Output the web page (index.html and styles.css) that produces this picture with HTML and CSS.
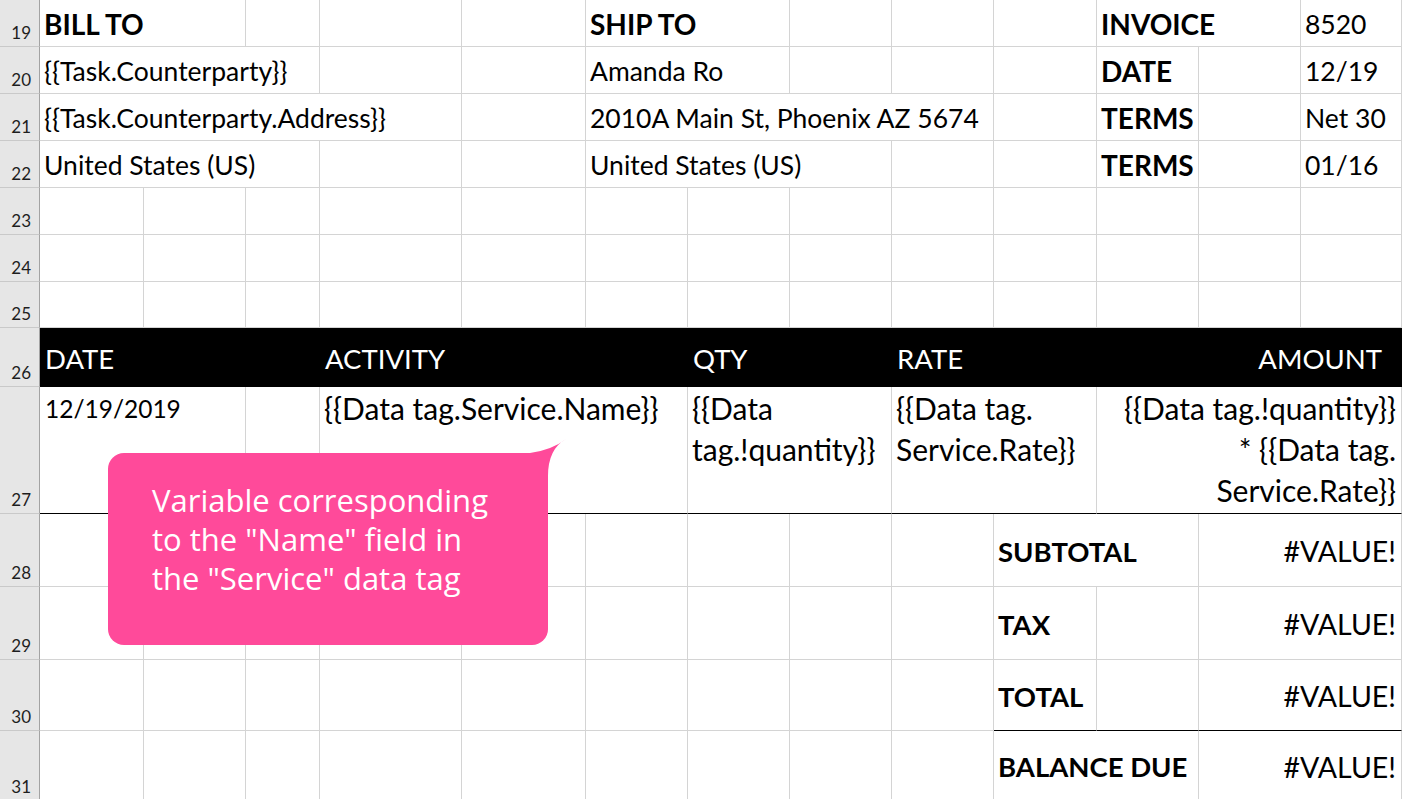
FILE: index.html
```html
<!DOCTYPE html>
<html lang="en">
<head>
<meta charset="utf-8">
<title>Invoice template</title>
<link rel="stylesheet" href="styles.css">
</head>
<body>
<div class="sheet">
  <div class="grid">
    <!-- row 19 -->
    <div class="rh">19</div>
    <div class="c s2 b">BILL TO</div>
    <div class="c"></div>
    <div class="c"></div>
    <div class="c"></div>
    <div class="c s2 b">SHIP TO</div>
    <div class="c"></div>
    <div class="c"></div>
    <div class="c"></div>
    <div class="c s2 b">INVOICE</div>
    <div class="c">8520</div>
    <!-- row 20 -->
    <div class="rh">20</div>
    <div class="c s3">{{Task.Counterparty}}</div>
    <div class="c"></div>
    <div class="c"></div>
    <div class="c s2">Amanda Ro</div>
    <div class="c"></div>
    <div class="c"></div>
    <div class="c"></div>
    <div class="c b">DATE</div>
    <div class="c"></div>
    <div class="c">12/19</div>
    <!-- row 21 -->
    <div class="rh">21</div>
    <div class="c s4">{{Task.Counterparty.Address}}</div>
    <div class="c"></div>
    <div class="c s4">2010A Main St, Phoenix AZ 5674</div>
    <div class="c"></div>
    <div class="c b">TERMS</div>
    <div class="c"></div>
    <div class="c">Net 30</div>
    <!-- row 22 -->
    <div class="rh">22</div>
    <div class="c s3">United States (US)</div>
    <div class="c"></div>
    <div class="c"></div>
    <div class="c s3">United States (US)</div>
    <div class="c"></div>
    <div class="c"></div>
    <div class="c b">TERMS</div>
    <div class="c"></div>
    <div class="c">01/16</div>
    <!-- row 23 -->
    <div class="rh">23</div>
    <div class="c"></div><div class="c"></div><div class="c"></div><div class="c"></div><div class="c"></div><div class="c"></div><div class="c"></div><div class="c"></div><div class="c"></div><div class="c"></div><div class="c"></div><div class="c"></div><div class="c"></div>
    <!-- row 24 -->
    <div class="rh">24</div>
    <div class="c"></div><div class="c"></div><div class="c"></div><div class="c"></div><div class="c"></div><div class="c"></div><div class="c"></div><div class="c"></div><div class="c"></div><div class="c"></div><div class="c"></div><div class="c"></div><div class="c"></div>
    <!-- row 25 -->
    <div class="rh">25</div>
    <div class="c"></div><div class="c"></div><div class="c"></div><div class="c"></div><div class="c"></div><div class="c"></div><div class="c"></div><div class="c"></div><div class="c"></div><div class="c"></div><div class="c"></div><div class="c"></div><div class="c"></div>
    <!-- row 26 header -->
    <div class="rh">26</div>
    <div class="hd s3">DATE</div>
    <div class="hd s3">ACTIVITY</div>
    <div class="hd s2">QTY</div>
    <div class="hd s2">RATE</div>
    <div class="hd s3 right">AMOUNT</div>
    <!-- row 27 items -->
    <div class="rh">27</div>
    <div class="it s2 date">12/19/2019</div>
    <div class="it"></div>
    <div class="it s3">{{Data tag.Service.Name}}</div>
    <div class="it s2">{{Data<br>tag.!quantity}}</div>
    <div class="it s2">{{Data tag.<br>Service.Rate}}</div>
    <div class="it s3 right">{{Data tag.!quantity}}<br>* {{Data tag.<br>Service.Rate}}</div>
    <!-- row 28 -->
    <div class="rh">28</div>
    <div class="c"></div><div class="c"></div><div class="c"></div><div class="c"></div><div class="c"></div><div class="c"></div><div class="c"></div><div class="c"></div><div class="c"></div>
    <div class="c s2 tb">SUBTOTAL</div>
    <div class="c s2 val">#VALUE!</div>
    <!-- row 29 -->
    <div class="rh">29</div>
    <div class="c"></div><div class="c"></div><div class="c"></div><div class="c"></div><div class="c"></div><div class="c"></div><div class="c"></div><div class="c"></div><div class="c"></div>
    <div class="c tb">TAX</div>
    <div class="c"></div>
    <div class="c s2 val">#VALUE!</div>
    <!-- row 30 -->
    <div class="rh">30</div>
    <div class="c"></div><div class="c"></div><div class="c"></div><div class="c"></div><div class="c"></div><div class="c"></div><div class="c"></div><div class="c"></div><div class="c"></div>
    <div class="c tb bb">TOTAL</div>
    <div class="c bb"></div>
    <div class="c s2 val bb">#VALUE!</div>
    <!-- row 31 -->
    <div class="rh">31</div>
    <div class="c"></div><div class="c"></div><div class="c"></div><div class="c"></div><div class="c"></div><div class="c"></div><div class="c"></div><div class="c"></div><div class="c"></div>
    <div class="c s2 tb">BALANCE DUE</div>
    <div class="c s2 val">#VALUE!</div>
  </div>

  <div class="callout">
    <svg class="tail" width="50" height="40" viewBox="0 0 50 40" aria-hidden="true">
      <path d="M0 40 L0 17 L10 17 Q32 14 46 3 Q28 13 28 40 Z" fill="#ff4a9a"/>
    </svg>
    <p class="callout-text">Variable corresponding<br>to the "Name" field in<br>the "Service" data tag</p>
  </div>
</div>
</body>
</html>
```

FILE: styles.css
```css
html, body {
  margin: 0;
  padding: 0;
  background: #ffffff;
  overflow: hidden;
}

.sheet {
  position: relative;
  width: 1402px;
  height: 799px;
  overflow: hidden;
  font-family: Lato, "Liberation Sans", sans-serif;
  color: #000;
}

.grid {
  display: grid;
  grid-template-columns: 40px 104px 102px 74px 142px 124px 102px 102px 102px 102px 103px 102px 102px 101px;
  grid-template-rows: 47px 47px 47px 47px 47px 47px 46px 59px 127px 73px 73px 71px 70px;
}

.s2 { grid-column: span 2; }
.s3 { grid-column: span 3; }
.s4 { grid-column: span 4; }

/* row header */
.rh {
  box-sizing: border-box;
  background: #e6e6e6;
  border-right: 1px solid #a3a3a3;
  border-bottom: 1px solid #c9c9c9;
  display: flex;
  align-items: flex-end;
  justify-content: flex-end;
  padding: 0 8px 3px 0;
  font-size: 17px;
  line-height: 20px;
  color: #1e1e1e;
}

/* ordinary cell */
.c {
  box-sizing: border-box;
  border-right: 1px solid #d4d4d4;
  border-bottom: 1px solid #d4d4d4;
  display: flex;
  align-items: center;
  padding: 2px 4px 0 4px;
  white-space: nowrap;
  font-size: 26.5px;
}

.b {
  font-weight: 700;
  font-size: 28px;
}

/* black table header */
.hd {
  box-sizing: border-box;
  background: #000;
  color: #fff;
  display: flex;
  align-items: center;
  padding: 2px 4px 0 5px;
  white-space: nowrap;
  font-size: 27.5px;
}

.hd.right {
  justify-content: flex-end;
  padding-right: 20px;
}

/* item row */
.it {
  box-sizing: border-box;
  border-right: 1px solid #d4d4d4;
  border-bottom: 1px solid #000;
  padding: 1px 5px 0 4px;
  font-size: 30px;
  line-height: 41px;
  white-space: nowrap;
}

.it.date {
  font-size: 24.5px;
  padding-left: 5px;
}

.it.right {
  text-align: right;
  padding-right: 5px;
}

/* totals */
.tb {
  font-weight: 700;
  font-size: 27.5px;
  padding-left: 4px;
}

.val {
  justify-content: flex-end;
  padding-right: 5px;
  font-size: 28.5px;
}

.bb {
  border-bottom-color: #000;
}

/* callout bubble */
.callout {
  position: absolute;
  left: 108px;
  top: 453px;
  width: 440px;
  height: 192px;
  box-sizing: border-box;
  background: #ff4a9a;
  border-radius: 16px 0 16px 16px;
  padding: 28px 16px 0 44px;
}

.tail {
  position: absolute;
  left: 412px;
  top: -17px;
  display: block;
}

.callout-text {
  margin: 0;
  color: #fff;
  font-family: "Open Sans", "Noto Sans", sans-serif;
  font-size: 31px;
  line-height: 39px;
  white-space: nowrap;
}
```
